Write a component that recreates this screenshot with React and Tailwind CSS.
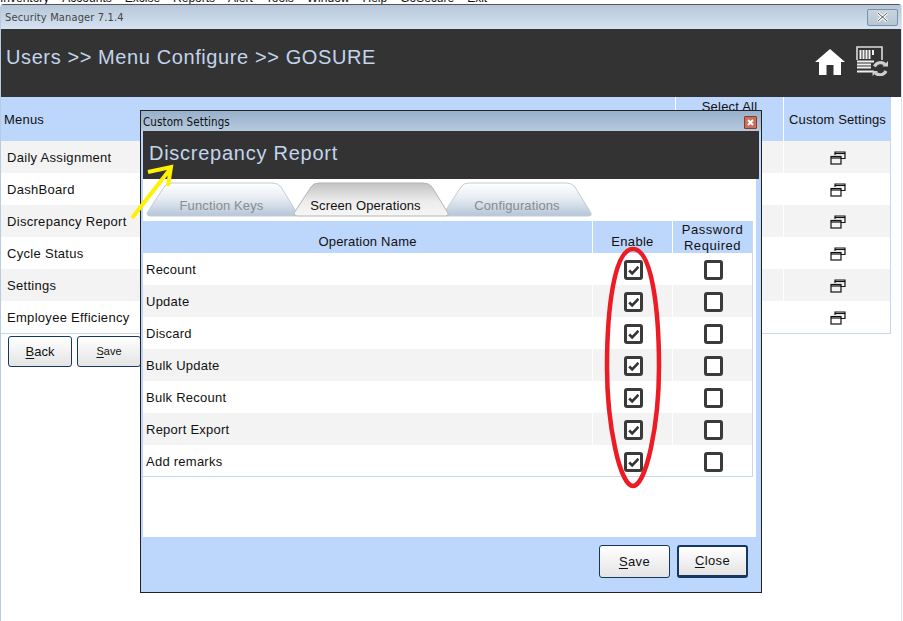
const menus = ["Daily Assignment", "DashBoard", "Discrepancy Report", "Cycle Status", "Settings", "Employee Efficiency"];
const ops = ["Recount", "Update", "Discard", "Bulk Update", "Bulk Recount", "Report Export", "Add remarks"];

function RestoreIcon() {
  return (
    <svg width="16" height="14" viewBox="0 0 16 14" fill="none" stroke="#111" strokeWidth="1.2">
      <path d="M5 4V1h10v6.5h-4" />
      <path d="M5 2.5h10" />
      <rect x="1" y="5.5" width="10" height="7.5" fill="none" />
      <path d="M1 7h10" />
    </svg>
  );
}

function HomeIcon() {
  return (
    <svg width="30" height="26" viewBox="0 0 30 26" fill="#fff">
      <path d="M15 0 L30 13 L26 13 L26 26 L18.5 26 L18.5 16 L11.5 16 L11.5 26 L4 26 L4 13 L0 13 Z" />
    </svg>
  );
}

function SyncIcon() {
  return (
    <svg width="32" height="30" viewBox="0 0 32 30" fill="none">
      <path d="M1 14V1h25v13" stroke="#ddd" strokeWidth="1.6" />
      <path d="M4.5 4v9M7.5 4v9M10.5 4v9M13.5 4v9M17 4v5" stroke="#f2f2f2" strokeWidth="2" />
      <path d="M1 15.5h17M1 18.5h14M1 21.5h14M1 25.5h17" stroke="#eee" strokeWidth="2" />
      <path d="M18.5 20.5 A6.5 6.5 0 0 1 29 18.5" stroke="#d0d0d0" strokeWidth="3.2" />
      <path d="M30 25 A6.5 6.5 0 0 1 19.5 27" stroke="#d0d0d0" strokeWidth="3.2" />
      <path d="M26.5 20.5h5.5v-5.5z" fill="#d0d0d0" />
      <path d="M22 25h-5.5v5z" fill="#d0d0d0" />
    </svg>
  );
}

function Check({ checked }) {
  return (
    <span className="relative block w-[19px] h-[20px] rounded-[3px] border-[3px] border-[#3a3a3a] bg-white ml-[1px] mt-[1px]">
      {checked && (
        <svg className="absolute left-[1px] top-[2px]" width="11" height="12" viewBox="0 0 11 12" fill="none">
          <path d="M1.2 5.5 L4.2 8.4 L10.4 1.8" stroke="#333" strokeWidth="2.6" />
        </svg>
      )}
    </span>
  );
}

function Tab({ label, active, width, id, className }) {
  return (
    <div className={"relative h-[35px] flex items-end justify-center " + className} style={{ width }}>
      <svg className="absolute inset-0" width={width} height="35" viewBox={`0 0 ${width} 35`}>
        <defs>
          <linearGradient id={id} x1="0" y1="0" x2="0" y2="1">
            {active ? <stop offset="0" stopColor="#c2c2c2" /> : <stop offset="0" stopColor="#ffffff" />}
            {active ? <stop offset="0.55" stopColor="#ececec" /> : <stop offset="0.45" stopColor="#e8edf3" />}
            {active ? <stop offset="1" stopColor="#f6f6f6" /> : <stop offset="1" stopColor="#b4c6d9" />}
          </linearGradient>
        </defs>
        <path
          d={`M1 31 Q1 34 4 34 H${width - 4} Q${width - 1} 34 ${width - 2} 31 L${width - 18} 5 Q${width - 21} 1 ${width - 27} 1 H26 Q20 1 18 5 Z`}
          fill={`url(#${id})`}
          stroke={active ? "#b4b4b4" : "#c4ccd4"}
          strokeWidth="1"
        />
      </svg>
      <span className={"relative mb-[3px] text-[13px] leading-[16px] tracking-[0.12px] " + (active ? "text-[#111] mr-[12px]" : "text-[#8b8b8b] mr-[2px]")}>
        {label}
      </span>
    </div>
  );
}

function WinButton({ label, hot, className }) {
  return (
    <button className={"flex items-center justify-center rounded-[3px] border-[#16375f] bg-gradient-to-b from-white to-[#e4e4e4] text-[#111] " + className}>
      <span className="underline underline-offset-2">{hot}</span>
      {label}
    </button>
  );
}

export default function App() {
  return (
    <div className="relative w-[903px] h-[621px] overflow-hidden bg-white text-[13px] text-[#111]" style={{ fontFamily: '"Liberation Sans", Arial, sans-serif' }}>
      {/* app menu, almost cut off */}
      <div className="h-[4px] overflow-hidden flex gap-[13px] text-[12px] leading-[4px] text-[#111] items-end">
        {["Inventory", "Accounts", "Excise", "Reports", "Alert", "Tools", "Window", "Help", "GoSecure", "Exit"].map((m) => (
          <span key={m} className="relative -top-[4px]">{m}</span>
        ))}
      </div>

      {/* main window */}
      <div className="h-[617px] w-[902px] rounded-t-[4px] border-t border-t-[#555] border-l border-l-[#b9cbe0] border-r border-r-[#d5e2f1] flex flex-col">
        <div className="h-[24px] flex items-center justify-between pl-[4px] pr-[3px] bg-gradient-to-b from-[#b7c7d9] to-[#d5e3f2] shrink-0">
          <span className="text-[11px] text-[#444] tracking-[0.15px] pt-[3px]" style={{ fontFamily: '"DejaVu Sans Condensed", "Open Sans", sans-serif' }}>Security Manager 7.1.4</span>
          <span className="w-[31px] h-[17px] rounded-[2px] border border-[#7d90a4] bg-gradient-to-b from-[#c8d4e0] to-[#b7c5d4] flex items-center justify-center">
            <svg width="13" height="10" viewBox="0 0 13 10"><path d="M2 1l9 8M11 1l-9 8" stroke="#fff" strokeWidth="3" /><path d="M2 1l9 8M11 1l-9 8" stroke="#555" strokeWidth="1" /></svg>
          </span>
        </div>
        <div className="h-[68px] bg-[#333333] shrink-0 flex justify-between pl-[5px] pr-[13px]">
          <div className="pt-[14px] text-[20px] leading-[28px] tracking-[0.6px] text-[#c3d4ec]">Users &gt;&gt; Menu Configure &gt;&gt; GOSURE</div>
          <div className="flex items-start gap-[11px] pt-[17px]">
            <div className="pt-[3px]"><HomeIcon /></div>
            <SyncIcon />
          </div>
        </div>
        <div className="w-[890px]">
          <div className="grid grid-cols-[674px_108px_108px] h-[44px] bg-[#bdd6fb]">
            <div className="pl-[3px] pt-[2px] flex items-center tracking-[0.2px]">Menus</div>
            <div className="border-l border-white text-center tracking-[0.2px]">Select All</div>
            <div className="border-l border-white pt-[2px] flex items-center justify-center tracking-[0.1px]">Custom Settings</div>
          </div>
          <div className="border-b border-[#c6d8ef] border-r">
            {menus.map((m, i) => (
              <div key={m} className={"grid grid-cols-[674px_108px_108px] h-[32px] items-stretch " + (i % 2 === 0 ? "bg-[#f3f3f3]" : "bg-white")}>
                <div className="pl-[6px] pt-[1px] flex items-center tracking-[0.3px]">{m}</div>
                <div className="border-l border-white" />
                <div className="border-l border-white pt-[2px] flex items-center justify-center"><RestoreIcon /></div>
              </div>
            ))}
          </div>
          <div className="flex gap-[5px] pl-[7px] pt-[2px]">
            <WinButton hot="B" label="ack" className="w-[64px] h-[31px] border text-[13px]" />
            <WinButton hot="S" label="ave" className="w-[64px] h-[31px] border text-[11px]" />
          </div>
        </div>
      </div>

      {/* dialog */}
      <div className="absolute left-[140px] top-[110px] w-[622px] h-[483px] border border-[#222] bg-[#bdd6fb] flex flex-col">
        <div className="h-[20px] shrink-0 flex items-center justify-between pl-[2px] pr-[3px] bg-gradient-to-b from-[#98b0ca] to-[#b6c9de]">
          <span className="text-[11.5px] text-[#111] tracking-[0.1px] pt-[3px]" style={{ fontFamily: '"DejaVu Sans Condensed", "Open Sans", sans-serif' }}>Custom Settings</span>
          <span className="w-[13px] h-[13px] mr-[1px] mt-[2px] rounded-[1px] border border-[#8a3b2a] bg-[#c9705b] flex items-center justify-center">
            <svg width="9" height="9" viewBox="0 0 9 9"><path d="M2 2l5 5M7 2l-5 5" stroke="#fff" strokeWidth="2" /></svg>
          </span>
        </div>
        <div className="ml-[2px] mr-[2px] h-[48px] shrink-0 bg-[#333333] pl-[6px] pt-[9px] text-[20px] leading-[26px] tracking-[0.74px] text-[#c3d4ec]">
          Discrepancy Report
        </div>
        <div className="ml-[2px] mr-[5px] flex-1 bg-white flex flex-col">
          <div className="h-[42px] shrink-0 flex items-start pl-[3px] pt-[3px]">
            <Tab label="Function Keys" width={153} id="t1" className="pt-0" />
            <Tab label="Screen Operations" width={157} id="t2" active className="-ml-[6px] z-10" />
            <Tab label="Configurations" width={150} id="t3" className="-ml-[7px]" />
          </div>
          <div className="w-[610px] h-[256px] overflow-hidden border-b border-r border-[#c6d8ef]">
            <div className="grid grid-cols-[449px_80px_80px] h-[32px] bg-[#bdd6fb]">
              <div className="flex items-end justify-center pb-[3px] tracking-[0.2px]">Operation Name</div>
              <div className="border-l border-white flex items-end justify-center pb-[3px] tracking-[0.3px]">Enable</div>
              <div className="border-l border-white text-center leading-[16px] pt-[1px] tracking-[0.55px]">Password<br />Required</div>
            </div>
            {ops.map((o, i) => (
              <div key={o} className={"grid grid-cols-[449px_80px_80px] h-[32px] " + (i % 2 === 1 ? "bg-[#f3f3f3]" : "bg-white")}>
                <div className="pl-[3px] pt-[1px] flex items-center tracking-[0.25px]">{o}</div>
                <div className="border-l border-white flex items-center justify-center"><Check checked /></div>
                <div className="border-l border-white flex items-center justify-center"><Check /></div>
              </div>
            ))}
          </div>
        </div>
        <div className="h-[55px] shrink-0 flex justify-end gap-[7px] pt-[8px] pr-[13px] pb-[13px]">
          <WinButton hot="S" label="ave" className="w-[71px] h-[33px] border text-[13px] tracking-[0.4px]" />
          <WinButton hot="C" label="lose" className="w-[71px] h-[33px] border-2 border-b-[3px] border-[#1f4f9c] text-[13px] tracking-[0.4px]" />
        </div>
      </div>

      {/* hand-drawn annotations */}
      <svg className="absolute inset-0 pointer-events-none" width="903" height="621" fill="none">
        <path d="M132 218 L171 168 M148 172 L171 167 L168 186" stroke="#fff200" strokeWidth="4" />
        <path d="M633 249 C614 249 607 310 607 367 C607 425 620 486 633 486 C646 486 659 425 659 367 C659 310 652 249 633 249 Z" stroke="#ed1c24" strokeWidth="4.5" />
      </svg>
    </div>
  );
}
